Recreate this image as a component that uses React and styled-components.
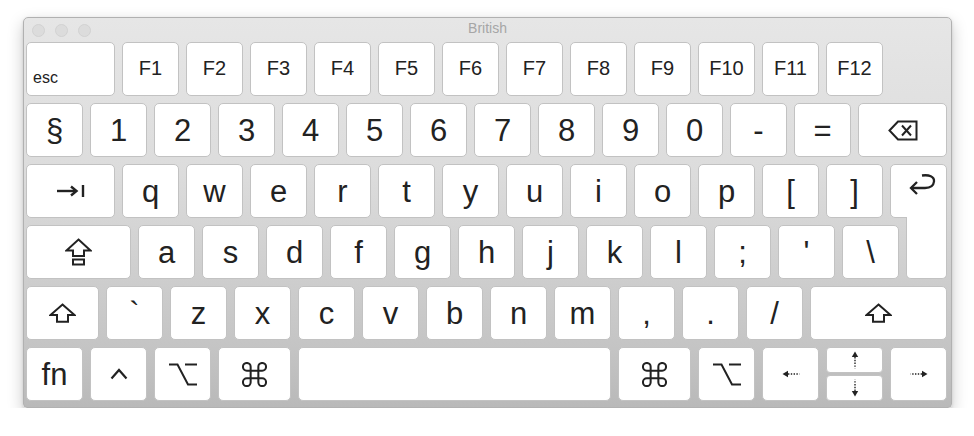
import React from "react";
import styled, { createGlobalStyle } from "styled-components";

const GlobalStyle = createGlobalStyle`
  body {
    margin: 0;
    background: #ffffff;
    font-family: "Liberation Sans", Arial, sans-serif;
  }
`;

const Page = styled.div`
  padding: 17px 0 0 23px;
`;

const Window = styled.div`
  width: 929px;
  height: 391px;
  box-sizing: border-box;
  border: 1px solid #b1b1b1;
  border-radius: 5px 5px 4px 4px;
  background: linear-gradient(#e6e6e6 0%, #dcdcdc 40%, #c4c4c4 85%, #b9b9b9 100%);
  box-shadow: 0 6px 16px rgba(0, 0, 0, 0.22), 0 1px 3px rgba(0, 0, 0, 0.12);
  display: flex;
  flex-direction: column;
`;

const TitleBar = styled.div`
  height: 24px;
  display: grid;
  grid-template-columns: 1fr auto 1fr;
  align-items: center;
`;

const Lights = styled.div`
  display: flex;
  gap: 10px;
  padding-left: 8px;
  padding-top: 1px;
`;

const Light = styled.span`
  width: 13px;
  height: 13px;
  border-radius: 50%;
  box-sizing: border-box;
  background: #dcdcdc;
  border: 1px solid #d2d2d2;
`;

const Title = styled.div`
  font-size: 14px;
  color: #a6a6a6;
  padding-bottom: 4px;
`;

const Board = styled.div`
  display: flex;
  flex-direction: column;
  gap: 7px;
  padding: 0 4px 6px 2px;
`;

const Row = styled.div`
  display: flex;
  gap: 7px;
  height: 54px;
`;

const Key = styled.div`
  position: relative;
  width: ${(p) => p.$w || 57}px;
  height: 54px;
  box-sizing: border-box;
  flex: none;
  background: #ffffff;
  border: 1px solid #c2c2c2;
  border-radius: 5px;
  display: flex;
  align-items: center;
  justify-content: center;
  color: #222222;
  font-size: ${(p) => p.$size || 31}px;
  line-height: 1;
`;

const FKey = styled(Key)`
  font-size: 20px;
  padding-bottom: 2px;
`;

const EscKey = styled(Key)`
  align-items: flex-end;
  justify-content: flex-start;
  font-size: 16px;
  padding: 0 0 9px 6px;
`;

const ReturnTop = styled(Key)`
  border-bottom-right-radius: 0;
  align-items: flex-start;
  justify-content: flex-end;
  padding: 8px 10px 0 0;
`;

const ReturnBottom = styled(Key)`
  z-index: 1;
  height: 62px;
  margin-top: -8px;
  border-top: none;
  border-top-left-radius: 0;
  border-top-right-radius: 0;
`;

const SplitKey = styled.div`
  width: 57px;
  flex: none;
  display: flex;
  flex-direction: column;
  gap: 2px;
`;

const HalfKey = styled(Key)`
  height: 26px;
  width: 57px;
  border-radius: 4px;
`;

const Icon = styled.svg`
  display: block;
  fill: none;
  stroke: #222222;
  stroke-width: ${(p) => p.$sw || 2};
  stroke-linejoin: miter;
`;

const ShiftIcon = () => (
  <Icon width="27" height="20" viewBox="0 0 27 20">
    <path d="M13.5 1.5 L25.5 12 H19 V18.8 H8 V12 H1.5 Z" />
  </Icon>
);

const CapsIcon = () => (
  <Icon width="27" height="28" viewBox="0 0 27 28">
    <path d="M13.5 1.5 L25.5 12.5 H19 V18 H8 V12.5 H1.5 Z" />
    <rect x="8" y="21.5" width="11" height="5" />
  </Icon>
);

const TabIcon = () => (
  <Icon width="29" height="14" viewBox="0 0 29 14" $sw={2.4}>
    <path d="M1 7 H20" />
    <path d="M15 2.5 L20.5 7 L15 11.5" />
    <path d="M27 1 V13" />
  </Icon>
);

const BackIcon = () => (
  <Icon width="30" height="21" viewBox="0 0 30 21">
    <path d="M1.5 10.5 L10 1.5 H28.5 V19.5 H10 Z" />
    <path d="M14 5.5 L23 15.5 M23 5.5 L14 15.5" />
  </Icon>
);

const ReturnIcon = () => (
  <Icon width="28" height="23" viewBox="0 0 28 23" $sw={2.3}>
    <path d="M14 2.5 C21 1.5 26.5 3.5 26 8.5 C25.5 13 21.5 15 17 15 H3" />
    <path d="M9 9 L3 15 L9 21" />
  </Icon>
);

const OptionIcon = () => (
  <Icon width="28" height="23" viewBox="0 0 28 23">
    <path d="M0 1.5 H8.5 L19 21.5 H28" />
    <path d="M16 1.5 H28" />
  </Icon>
);

const CommandIcon = () => (
  <Icon width="25" height="25" viewBox="0 0 26 26" $sw={2.1}>
    <path d="M9 21 V5 A4 4 0 1 0 5 9 H21 A4 4 0 1 0 17 5 V21 A4 4 0 1 0 21 17 H5 A4 4 0 1 0 9 21 Z" />
  </Icon>
);

const ControlIcon = () => (
  <Icon width="18" height="12" viewBox="0 0 18 12" $sw={2.2}>
    <path d="M1.5 10.5 L9 2 L16.5 10.5" />
  </Icon>
);

const Arrow = ({ dir }) => {
  const rot = { left: 0, up: 90, right: 180, down: 270 }[dir];
  return (
    <Icon width="18" height="18" viewBox="0 0 18 18" $sw={1.4} style={{ transform: `rotate(${rot}deg)` }}>
      <path d="M0.5 9 L6 5.8 V12.2 Z" fill="#222222" stroke="none" />
      <path d="M6 9 H17.5" strokeDasharray="1.4 1.4" />
    </Icon>
  );
};

const fkeys = ["F1", "F2", "F3", "F4", "F5", "F6", "F7", "F8", "F9", "F10", "F11", "F12"];
const numbers = ["1", "2", "3", "4", "5", "6", "7", "8", "9", "0", "-", "="];
const top = ["q", "w", "e", "r", "t", "y", "u", "i", "o", "p", "[", "]"];
const home = ["a", "s", "d", "f", "g", "h", "j", "k", "l", ";", "'", "\\"];
const bottom = ["`", "z", "x", "c", "v", "b", "n", "m", ",", ".", "/"];

export default function App() {
  return (
    <Page>
      <GlobalStyle />
      <Window>
        <TitleBar>
          <Lights>
            <Light />
            <Light />
            <Light />
          </Lights>
          <Title>British</Title>
          <div />
        </TitleBar>
        <Board>
          <Row>
            <EscKey $w={89}>esc</EscKey>
            {fkeys.map((k) => (
              <FKey key={k}>{k}</FKey>
            ))}
          </Row>
          <Row>
            <Key>§</Key>
            {numbers.map((k) => (
              <Key key={k}>{k}</Key>
            ))}
            <Key $w={89}>
              <BackIcon />
            </Key>
          </Row>
          <Row>
            <Key $w={89}>
              <TabIcon />
            </Key>
            {top.map((k) => (
              <Key key={k}>{k}</Key>
            ))}
            <ReturnTop>
              <ReturnIcon />
            </ReturnTop>
          </Row>
          <Row>
            <Key $w={105}>
              <CapsIcon />
            </Key>
            {home.map((k) => (
              <Key key={k}>{k}</Key>
            ))}
            <ReturnBottom $w={41} />
          </Row>
          <Row>
            <Key $w={73}>
              <ShiftIcon />
            </Key>
            {bottom.map((k) => (
              <Key key={k}>{k}</Key>
            ))}
            <Key $w={137}>
              <ShiftIcon />
            </Key>
          </Row>
          <Row>
            <Key>fn</Key>
            <Key>
              <ControlIcon />
            </Key>
            <Key>
              <OptionIcon />
            </Key>
            <Key $w={73}>
              <CommandIcon />
            </Key>
            <Key $w={313} />
            <Key $w={73}>
              <CommandIcon />
            </Key>
            <Key>
              <OptionIcon />
            </Key>
            <Key>
              <Arrow dir="left" />
            </Key>
            <SplitKey>
              <HalfKey>
                <Arrow dir="up" />
              </HalfKey>
              <HalfKey>
                <Arrow dir="down" />
              </HalfKey>
            </SplitKey>
            <Key>
              <Arrow dir="right" />
            </Key>
          </Row>
        </Board>
      </Window>
    </Page>
  );
}
